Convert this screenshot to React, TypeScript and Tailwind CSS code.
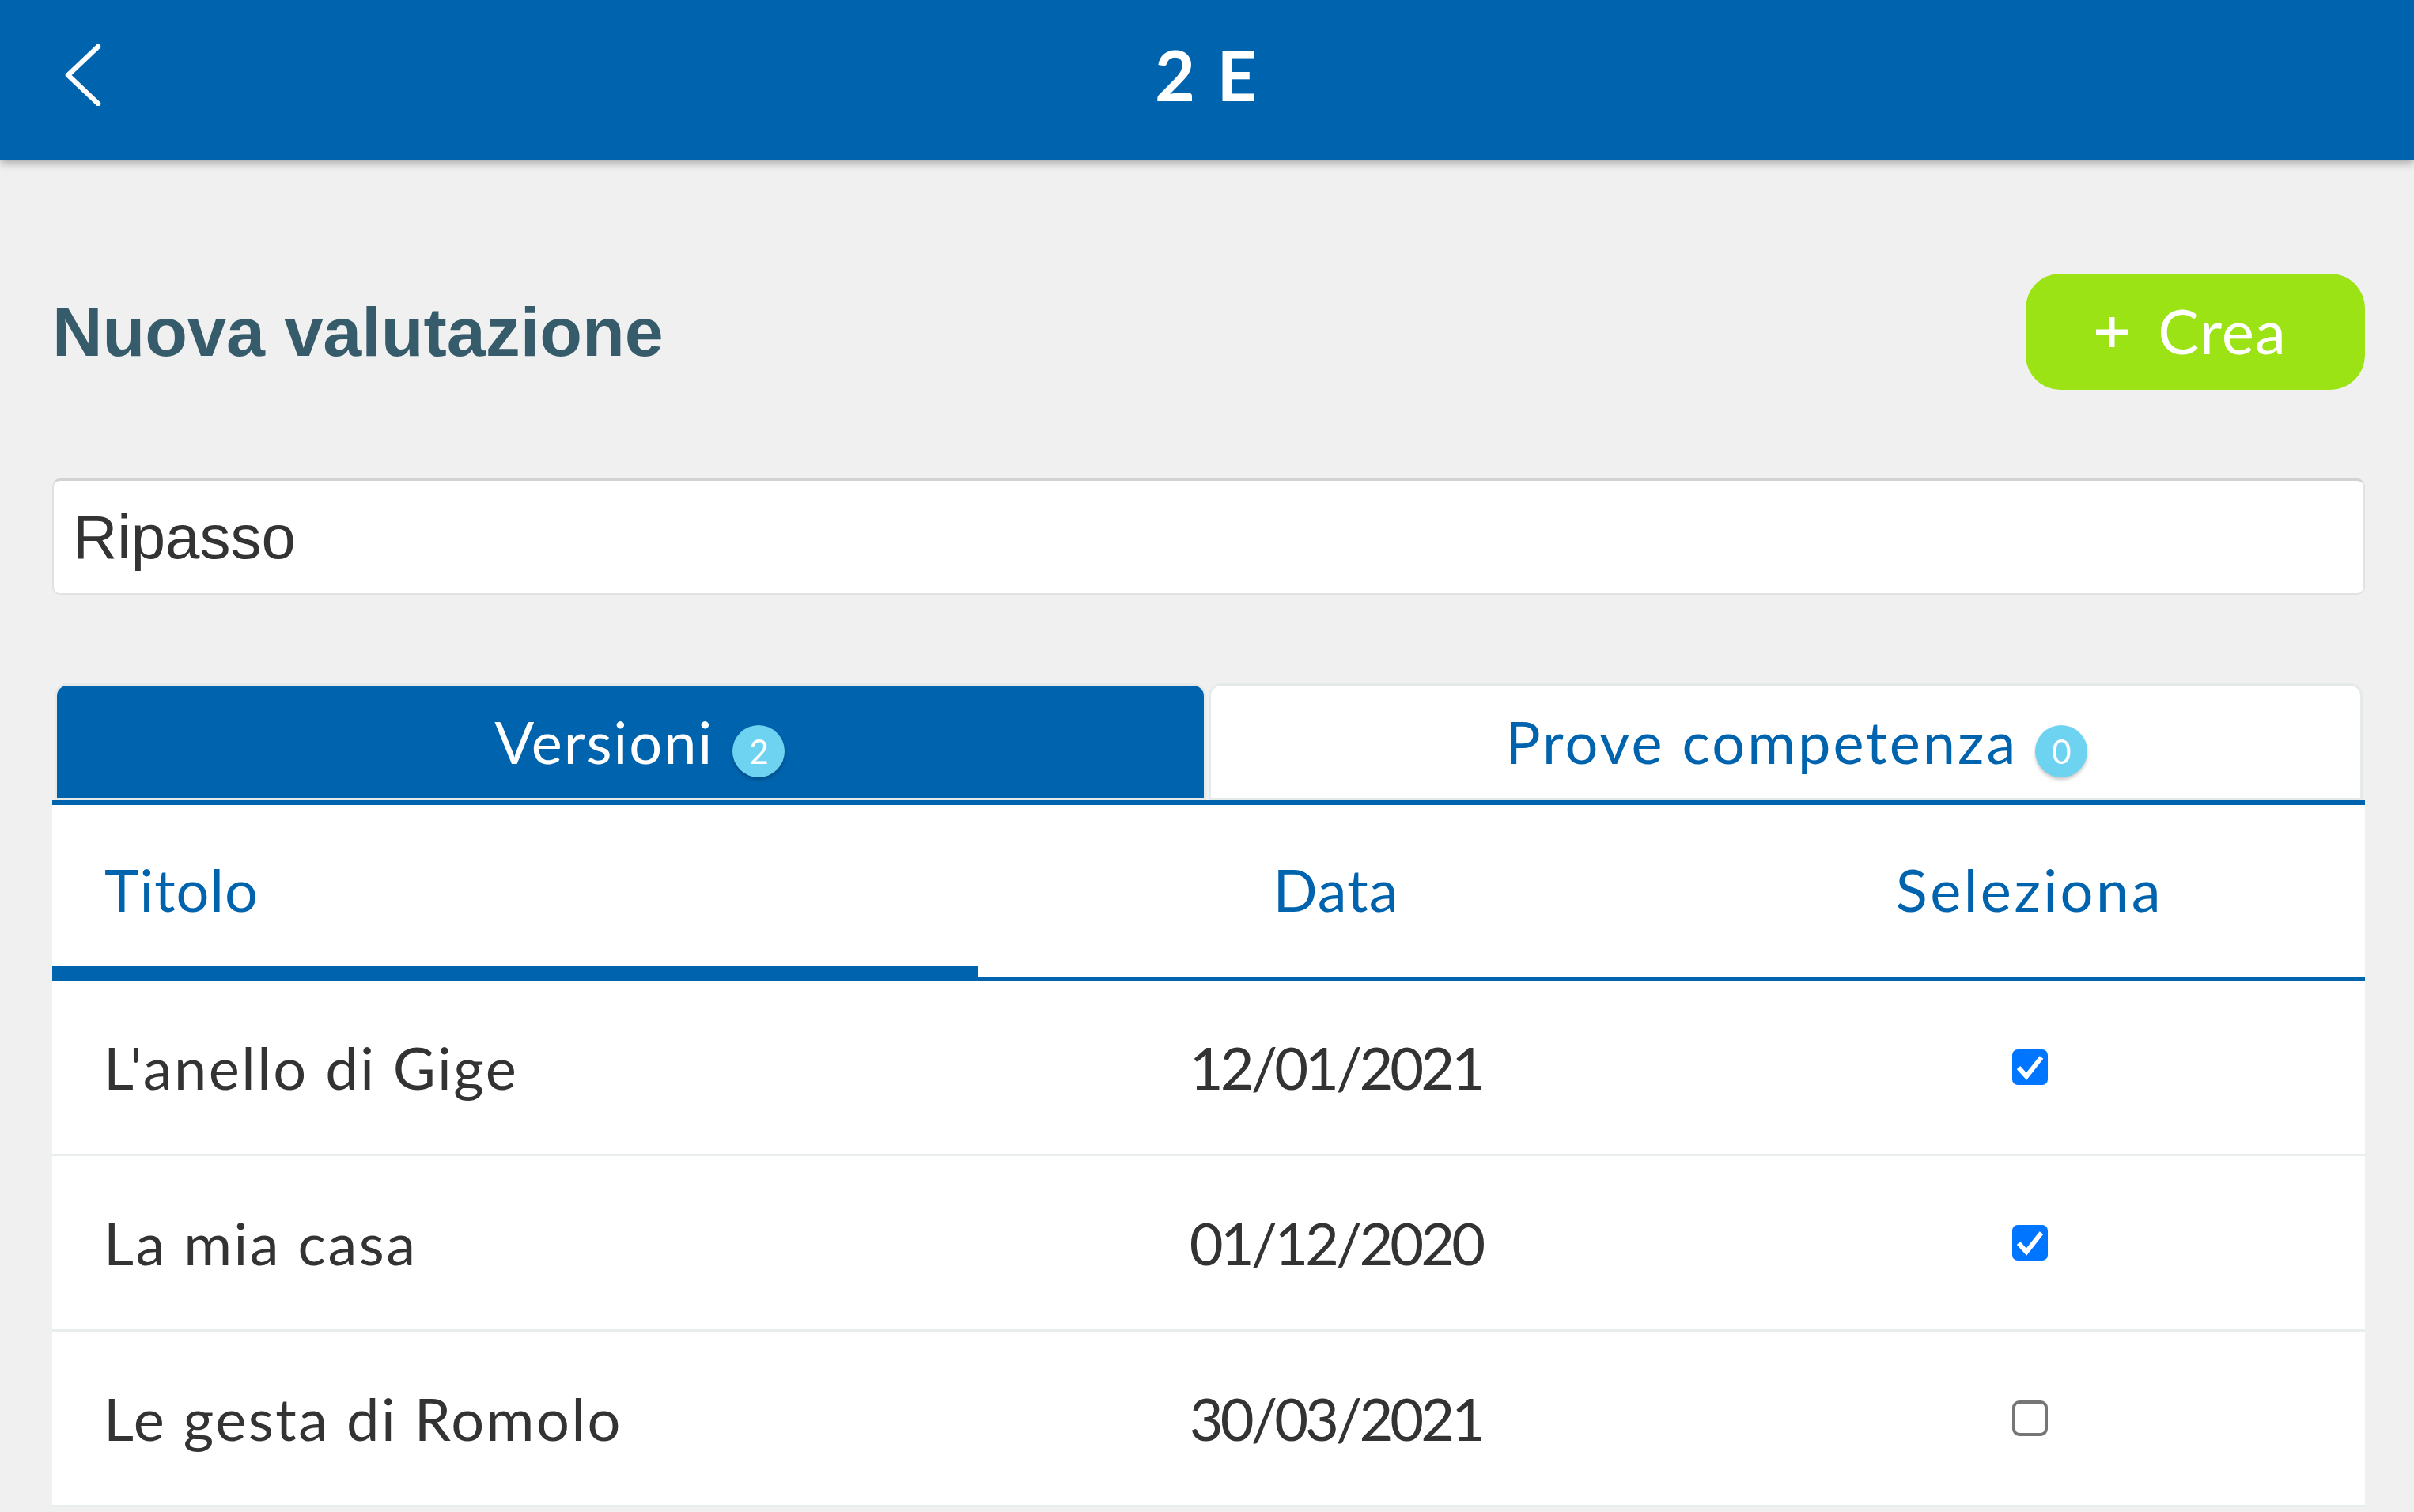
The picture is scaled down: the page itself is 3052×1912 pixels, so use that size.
import React from "react";

function Checkbox({ checked }: { checked: boolean }) {
  if (checked) {
    return (
      <div className="w-[45px] h-[45px] rounded-[7px] bg-[#0075ff] flex items-center justify-center">
        <svg width="45" height="45" viewBox="0 0 45 45">
          <polyline points="8,23 18,34 37,10" fill="none" stroke="#ffffff" strokeWidth="6" strokeLinejoin="miter" />
        </svg>
      </div>
    );
  }
  return <div className="w-[45px] h-[45px] rounded-[9px] border-[4px] border-[#767676] bg-white" />;
}

const rows = [
  { title: "L'anello di Gige", date: "12/01/2021", checked: true },
  { title: "La mia casa", date: "01/12/2020", checked: true },
  { title: "Le gesta di Romolo", date: "30/03/2021", checked: false },
];

export default function App() {
  const lato = { fontFamily: "Lato, 'Open Sans', sans-serif" } as React.CSSProperties;
  return (
    <div className="min-h-screen w-full bg-[#f0f0f0] overflow-hidden" style={lato}>
      {/* Header */}
      <div className="relative z-10 h-[202px] bg-[#0063ad] grid grid-cols-[1fr_auto_1fr] items-center shadow-[0_5px_10px_rgba(0,0,0,0.28)]">
        <div className="pl-[80px] flex items-center pb-[12px]">
          <svg width="50" height="78" viewBox="0 0 50 78">
            <polyline points="44,3 6,39 44,75" fill="none" stroke="#ffffff" strokeWidth="6.5" strokeLinecap="round" strokeLinejoin="round" />
          </svg>
        </div>
        <div className="text-white font-bold text-[88px] leading-none pb-[14px] tracking-[3px]">2 E</div>
        <div />
      </div>

      <div className="pl-[66px] pr-[62px]">
        {/* Title row */}
        <div className="pt-[144px] flex items-center justify-between">
          <h1
            className="text-[88px] font-bold text-[#365b6b] leading-none"
            style={{ fontFamily: "'Liberation Sans', Arial, sans-serif" }}
          >
            Nuova valutazione
          </h1>
          <button className="w-[429px] h-[147px] rounded-[44px] bg-[#9be314] text-white flex items-center justify-center gap-[38px] pr-[10px]">
            <svg width="40" height="38" viewBox="0 0 40 38">
              <rect x="16.5" y="0" width="7" height="38" fill="#ffffff" />
              <rect x="0" y="15.5" width="40" height="7" fill="#ffffff" />
            </svg>
            <span className="text-[78px] font-normal leading-none pb-[4px] tracking-[1px]">Crea</span>
          </button>
        </div>

        {/* Input */}
        <div className="mt-[112px] h-[147px] bg-white rounded-[10px] border-[2px] border-[#e2e2e2] border-t-[3px] border-t-[#d2d2d2] flex items-center pl-[24px]">
          <span
            className="text-[78px] text-[#333333] leading-none"
            style={{ fontFamily: "'Liberation Sans', Arial, sans-serif" }}
          >
            Ripasso
          </span>
        </div>

        {/* Tabs */}
        <div className="mt-[112px] flex gap-[3px] px-[3px]">
          <div className="flex-1 h-[148px] rounded-t-[16px] border-[3px] border-[#e4eaea] bg-[#0063ad] flex items-center justify-center pl-[24px] text-white">
            <span className="text-[74px] leading-none tracking-[2px]">Versioni</span>
            <span className="ml-[24px] mt-[24px] w-[66px] h-[66px] rounded-full bg-[#6dd3f0] shadow-[0_3px_4px_rgba(0,0,0,0.22)] flex items-center justify-center text-white text-[42px] leading-none">
              2
            </span>
          </div>
          <div className="flex-1 h-[148px] rounded-t-[16px] border-[3px] border-[#e4eaea] bg-white flex items-center justify-center pl-[28px] text-[#0063ad]">
            <span className="text-[74px] leading-none tracking-[3px]">Prove competenza</span>
            <span className="ml-[22px] mt-[24px] w-[66px] h-[66px] rounded-full bg-[#6dd3f0] shadow-[0_3px_4px_rgba(0,0,0,0.22)] flex items-center justify-center text-white text-[42px] leading-none">
              0
            </span>
          </div>
        </div>
        <div className="h-[6px] bg-[#0063ad]" />

        {/* Table */}
        <div className="bg-white">
          <div className="grid grid-cols-[1170px_906px_1fr] text-[#0063ad] text-[74px] leading-none">
            <div className="h-[204px] pt-[10px] flex items-center pl-[66px] tracking-[1px]">Titolo</div>
            <div className="h-[204px] pt-[10px] flex items-center justify-center tracking-[1px]">Data</div>
            <div className="h-[204px] pt-[10px] flex items-center justify-center tracking-[3.5px]">Seleziona</div>
          </div>
          <div className="h-[18px] flex items-end">
            <div className="w-[1170px] h-[18px] bg-[#0063ad]" />
            <div className="flex-1 h-[4px] bg-[#0063ad]" />
          </div>
          {rows.map((r) => (
            <div
              key={r.title}
              className="grid grid-cols-[1170px_906px_1fr] h-[222px] border-b-[3px] border-[#e8eded] text-[#333333] text-[74px] leading-none"
            >
              <div className="flex items-center pl-[65px] tracking-[2.5px]">{r.title}</div>
              <div className="flex items-center justify-center tracking-[-4px]">{r.date}</div>
              <div className="flex items-center justify-center">
                <Checkbox checked={r.checked} />
              </div>
            </div>
          ))}
        </div>
      </div>
    </div>
  );
}
